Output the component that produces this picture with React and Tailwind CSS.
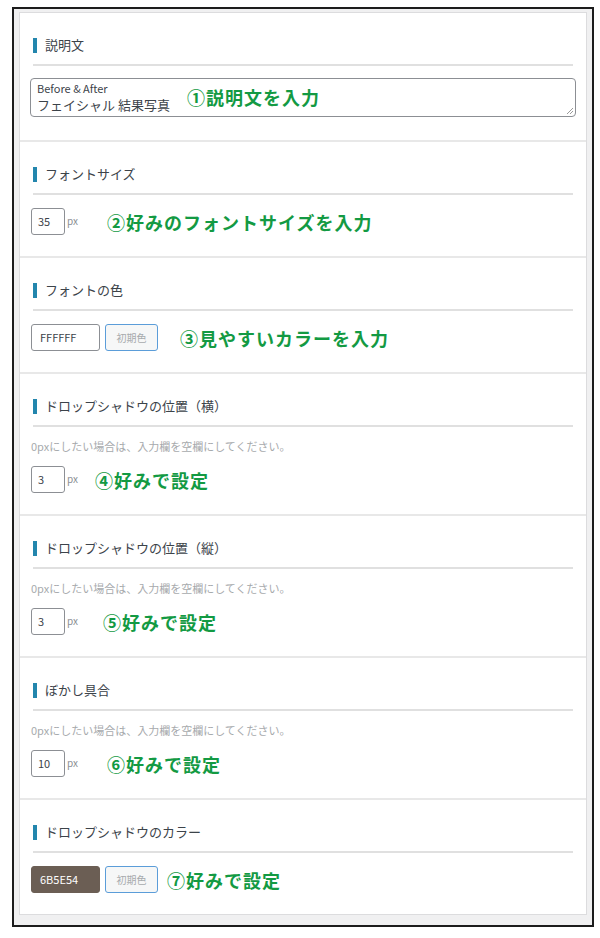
import React from 'react';

const FONT = { fontFamily: '"Noto Sans CJK JP", "Noto Sans", sans-serif' };

// heading with blue bar + rule under it
const Heading = ({ children }) => (
    <>
        <div className="flex items-center h-4 mx-[2px]">
            <span className="block w-[4px] h-[15px] bg-[#2386ad]" />
            <span className="ml-[8px] text-[13px] leading-4 text-[#3c434a]">{children}</span>
        </div>
        <div className="mt-[11px] mx-[2px] h-[2px] bg-[#e0e0e0]" />
    </>
);

const Note = ({ children, className = '' }) => (
    <span className={`text-[18px] leading-6 font-bold tracking-[1px] text-[#139a43] whitespace-nowrap ${className}`}>
        {children}
    </span>
);

const Helper = () => (
    <p className="mt-[12px] text-[11px] leading-[14px] text-[#a7aaad]">
        0pxにしたい場合は、入力欄を空欄にしてください。
    </p>
);

const NumberField = ({ value }) => (
    <div className="flex items-end">
        <div className="w-[34px] h-[27px] border border-[#8c8f94] rounded-[3px] bg-white flex items-center pl-[6px] text-[11px] text-[#3c434a]">
            {value}
        </div>
        <span className="ml-[2px] mb-[8px] text-[10px] leading-3 text-[#8c8f94]">px</span>
    </div>
);

const ColorField = ({ value, dark }) => (
    <div className="flex items-center">
        <div
            className={`w-[69px] h-[27px] rounded-[3px] flex items-center pl-[8px] text-[11px] ${
                dark ? 'bg-[#6b5e54] border border-[#6b5e54] text-white' : 'bg-white border border-[#8c8f94] text-[#3c434a]'
            }`}
        >
            {value}
        </div>
        <div className="ml-[5px] w-[53px] h-[27px] rounded-[3px] border border-[#5b9dd9] bg-[#f6f7f7] flex items-center justify-center text-[10px] text-[#a7aaad]">
            初期色
        </div>
    </div>
);

const Section = ({ children, last }) => (
    <div className={`px-[11px] pt-[24px] ${last ? 'pb-[21px]' : 'pb-[21px] border-b-2 border-[#e8e8e8]'}`}>
        {children}
    </div>
);

export default function App() {
    return (
        <div className="bg-white w-[600px] h-[938px] pt-[7px] pl-[12px]" style={FONT}>
            <div className="w-[582px] border-2 border-[#1c1c1c] bg-[#f0f0f1] pl-[5px] pr-[5px] pt-[3px] pb-[10px]">
                <div className="border border-[#dcdcde] bg-white">
                    {/* 説明文 */}
                    <div className="px-[11px] pt-[24px] pb-[23px] border-b-2 border-[#e8e8e8]">
                        <Heading>説明文</Heading>
                        <div className="relative mt-[12px] -mx-[1px] h-[39px] border border-[#8c8f94] rounded-[4px] bg-white pl-[6px] pt-[2px] text-[#3c434a]">
                            <div className="text-[11px] leading-[15px]">Before &amp; After</div>
                            <div className="text-[13px] leading-[18px]">フェイシャル 結果写真</div>
                            <Note className="absolute left-[156px] top-[6px]">①説明文を入力</Note>
                            <svg className="absolute right-[1px] bottom-[1px]" width="8" height="8" viewBox="0 0 8 8">
                                <path d="M7 1 L1 7 M7 4 L4 7" stroke="#9a9a9a" strokeWidth="1" />
                            </svg>
                        </div>
                    </div>

                    <Section>
                        <Heading>フォントサイズ</Heading>
                        <div className="mt-[13px] flex items-center">
                            <NumberField value="35" />
                            <Note className="ml-[29px]">②好みのフォントサイズを入力</Note>
                        </div>
                    </Section>

                    <Section>
                        <Heading>フォントの色</Heading>
                        <div className="mt-[13px] flex items-center">
                            <ColorField value="FFFFFF" />
                            <Note className="ml-[22px]">③見やすいカラーを入力</Note>
                        </div>
                    </Section>

                    <Section>
                        <Heading>ドロップシャドウの位置（横）</Heading>
                        <Helper />
                        <div className="mt-[13px] flex items-center">
                            <NumberField value="3" />
                            <Note className="ml-[17px]">④好みで設定</Note>
                        </div>
                    </Section>

                    <Section>
                        <Heading>ドロップシャドウの位置（縦）</Heading>
                        <Helper />
                        <div className="mt-[13px] flex items-center">
                            <NumberField value="3" />
                            <Note className="ml-[25px]">⑤好みで設定</Note>
                        </div>
                    </Section>

                    <Section>
                        <Heading>ぼかし具合</Heading>
                        <Helper />
                        <div className="mt-[13px] flex items-center">
                            <NumberField value="10" />
                            <Note className="ml-[29px]">⑥好みで設定</Note>
                        </div>
                    </Section>

                    <Section last>
                        <Heading>ドロップシャドウのカラー</Heading>
                        <div className="mt-[13px] flex items-center">
                            <ColorField value="6B5E54" dark />
                            <Note className="ml-[9px]">⑦好みで設定</Note>
                        </div>
                    </Section>
                </div>
            </div>
        </div>
    );
}
